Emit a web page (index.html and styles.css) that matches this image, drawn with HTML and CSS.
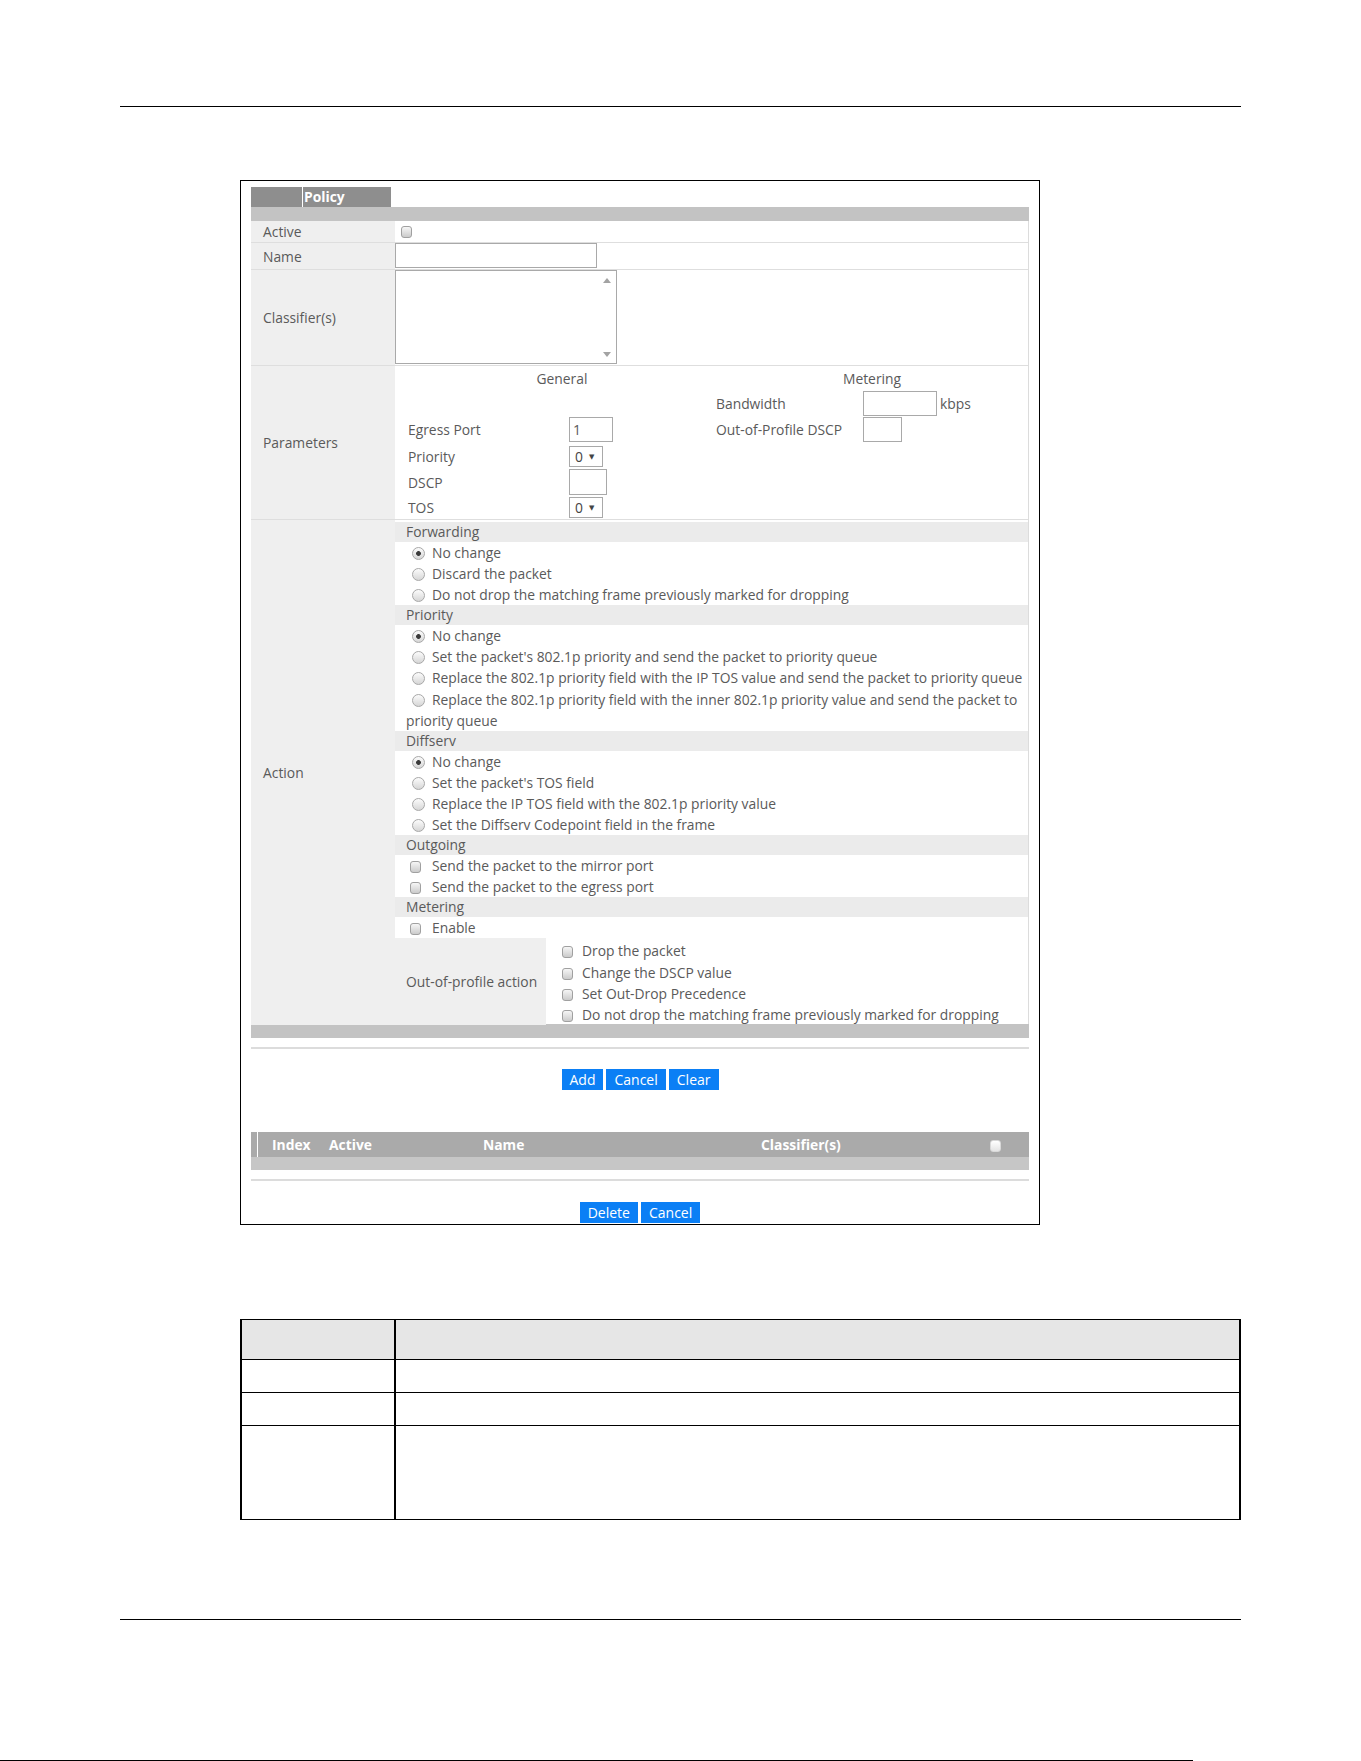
FILE: index.html
```html
<!DOCTYPE html>
<html lang="en">
  <head>
    <meta charset="UTF-8" />
    <title>Policy</title>
    <link rel="stylesheet" href="styles.css">
  </head>
  <body>
    <div class="page">
      <div class="rule rule-top"></div>

      <div class="shot">
        <div class="tab"><span class="tab-text">Policy</span></div>
        <div class="bar"></div>

        <div class="form">
          <div class="frow h-active">
            <div class="flabel">Active</div>
            <div class="fval"><input type="checkbox" class="cb cb-active"></div>
          </div>
          <div class="frow h-name">
            <div class="flabel">Name</div>
            <div class="fval top"><input type="text" class="tin w-name"></div>
          </div>
          <div class="frow h-class">
            <div class="flabel">Classifier(s)</div>
            <div class="fval top">
              <div class="tarea">
                <div class="tarea-body"></div>
                <div class="tarea-scroll"><span class="arr arr-up"></span><span class="arr arr-down"></span></div>
              </div>
            </div>
          </div>
          <div class="frow h-params">
            <div class="flabel">Parameters</div>
            <div class="params">
              <div class="phead">General</div>
              <div class="phead">Metering</div>

              <div></div><div></div>
              <div>Bandwidth</div>
              <div><input type="text" class="tin w-bw"><span class="unit">kbps</span></div>

              <div>Egress Port</div>
              <div><input type="text" class="tin w-egress" value="1"></div>
              <div>Out-of-Profile DSCP</div>
              <div><input type="text" class="tin w-oop"></div>

              <div>Priority</div>
              <div><span class="sel">0<i>&#9660;</i></span></div>
              <div></div><div></div>

              <div>DSCP</div>
              <div><input type="text" class="tin w-dscp"></div>
              <div></div><div></div>

              <div>TOS</div>
              <div><span class="sel">0<i>&#9660;</i></span></div>
              <div></div><div></div>
            </div>
          </div>
          <div class="frow h-action">
            <div class="flabel">Action</div>
            <div class="action">
              <div class="sec-h">Forwarding</div>
              <div class="item"><input type="radio" name="fwd" class="rd" checked>No change</div>
              <div class="item"><input type="radio" name="fwd" class="rd">Discard the packet</div>
              <div class="item"><input type="radio" name="fwd" class="rd">Do not drop the matching frame previously marked for dropping</div>

              <div class="sec-h">Priority</div>
              <div class="item"><input type="radio" name="pri" class="rd" checked>No change</div>
              <div class="item"><input type="radio" name="pri" class="rd">Set the packet's 802.1p priority and send the packet to priority queue</div>
              <div class="item"><input type="radio" name="pri" class="rd">Replace the 802.1p priority field with the IP TOS value and send the packet to priority queue</div>
              <div class="item item-2"><input type="radio" name="pri" class="rd">Replace the 802.1p priority field with the inner 802.1p priority value and send the packet to<br>priority queue</div>

              <div class="sec-h">Diffserv</div>
              <div class="item"><input type="radio" name="dsv" class="rd" checked>No change</div>
              <div class="item"><input type="radio" name="dsv" class="rd">Set the packet's TOS field</div>
              <div class="item"><input type="radio" name="dsv" class="rd">Replace the IP TOS field with the 802.1p priority value</div>
              <div class="item"><input type="radio" name="dsv" class="rd">Set the Diffserv Codepoint field in the frame</div>

              <div class="sec-h">Outgoing</div>
              <div class="item"><input type="checkbox" class="cb">Send the packet to the mirror port</div>
              <div class="item"><input type="checkbox" class="cb">Send the packet to the egress port</div>

              <div class="sec-h">Metering</div>
              <div class="item"><input type="checkbox" class="cb">Enable</div>

              <div class="oop">
                <div class="oop-label">Out-of-profile action</div>
                <div class="oop-list">
                  <div class="oop-item"><input type="checkbox" class="cb">Drop the packet</div>
                  <div class="oop-item"><input type="checkbox" class="cb">Change the DSCP value</div>
                  <div class="oop-item"><input type="checkbox" class="cb">Set Out-Drop Precedence</div>
                  <div class="oop-item"><input type="checkbox" class="cb">Do not drop the matching frame previously marked for dropping</div>
                </div>
              </div>
            </div>
          </div>
        </div>

        <div class="bar"></div>
        <div class="sep"></div>

        <div class="btns btns-top">
          <button class="btn">Add</button>
          <button class="btn">Cancel</button>
          <button class="btn">Clear</button>
        </div>

        <div class="list-head">
          <span class="list-line"></span>
          <span class="c-index">Index</span>
          <span class="c-active">Active</span>
          <span class="c-name">Name</span>
          <span class="c-class">Classifier(s)</span>
          <span class="c-check"><input type="checkbox" class="cb cb-light"></span>
        </div>
        <div class="list-sub"></div>
        <div class="sep"></div>

        <div class="btns btns-bottom">
          <button class="btn">Delete</button>
          <button class="btn">Cancel</button>
        </div>
      </div>

      <div class="doc">
        <div class="doc-row doc-head"><div></div><div></div></div>
        <div class="doc-row h33"><div></div><div></div></div>
        <div class="doc-row h33"><div></div><div></div></div>
        <div class="doc-row h94"><div></div><div></div></div>
      </div>

      <div class="rule rule-bottom"></div>
      <div class="edge"></div>
    </div>
  </body>
</html>
```

FILE: styles.css
```css
/* General styles */
* {
  box-sizing: border-box;
}

body {
  margin: 0;
  background-color: #fff;
  font-family: "Open Sans", "DejaVu Sans", sans-serif;
}

.page {
  width: 1361px;
  height: 1761px;
  overflow: hidden;
}

.rule {
  height: 1px;
  margin: 0 120px;
  background-color: #000;
}

.rule-top {
  margin-top: 106px;
}

.rule-bottom {
  margin-top: 99px;
}

.edge {
  width: 1193px;
  height: 1px;
  margin-top: 140px;
  background-color: #000;
}

/* Screenshot box */
.shot {
  width: 800px;
  margin: 73px 0 0 240px;
  padding: 6px 10px 1px;
  border: 1px solid #000;
  font-size: 13.85px;
  color: #5a5a5a;
}

.tab {
  width: 140px;
  height: 20px;
  padding-left: 51px;
  background-color: #8e8e8e;
}

.tab-text {
  display: block;
  height: 20px;
  padding-left: 1px;
  border-left: 1px solid #fff;
  color: #fff;
  font-weight: bold;
  line-height: 20px;
}

.bar {
  height: 14px;
  background-color: #c3c3c3;
}

.form {
  border-right: 1px solid #dcdcdc;
}

.frow {
  display: grid;
  grid-template-columns: 144px 1fr;
  border-bottom: 1px solid #dedede;
}

.h-active { height: 22px; }
.h-name { height: 27px; }
.h-class { height: 96px; }
.h-params { height: 154px; }
.h-action { height: 504px; border-bottom: none; }

.flabel {
  display: flex;
  align-items: center;
  padding-left: 12px;
  background-color: #efefef;
}

.fval {
  display: flex;
  align-items: center;
}

.fval.top {
  align-items: flex-start;
}

/* Inputs */
.tin {
  height: 25px;
  margin: 0;
  padding: 0 3px;
  border: 1px solid #a9a9a9;
  border-radius: 0;
  font: 14px "Open Sans", sans-serif;
  color: #5a5a5a;
  vertical-align: middle;
}

.w-name { width: 202px; }
.w-egress { width: 44px; }
.w-dscp { width: 38px; height: 26px; }
.w-bw { width: 74px; }
.w-oop { width: 39px; }

.unit {
  margin-left: 3px;
  vertical-align: middle;
}

.sel {
  display: inline-flex;
  align-items: center;
  width: 34px;
  height: 21px;
  padding-left: 5px;
  border: 1px solid #a9a9a9;
  color: #444;
}

.sel i {
  margin-left: 6px;
  font-style: normal;
  font-size: 7px;
}

.tarea {
  display: flex;
  width: 222px;
  height: 94px;
  border: 1px solid #a9a9a9;
}

.tarea-body {
  flex: 1;
}

.tarea-scroll {
  display: flex;
  flex-direction: column;
  justify-content: space-between;
  align-items: center;
  width: 19px;
  padding: 7px 0 6px;
}

.arr {
  width: 0;
  height: 0;
  border-left: 4px solid transparent;
  border-right: 4px solid transparent;
}

.arr-up {
  border-bottom: 5px solid #a3a3a3;
}

.arr-down {
  border-top: 5px solid #a3a3a3;
}

.cb {
  appearance: none;
  width: 11px;
  height: 12px;
  margin: 0;
  border: 1px solid #a0a0a0;
  border-radius: 3px;
  background: linear-gradient(#f6f6f6, #cbcbcb);
  vertical-align: -2px;
}

.cb-active {
  margin-left: 6px;
}

.cb-light {
  border-color: #d8d8d8;
  background: linear-gradient(#ffffff, #e4e4e4);
}

.rd {
  appearance: none;
  width: 13px;
  height: 13px;
  margin: 0 7px 0 6px;
  border: 1px solid #a8a8a8;
  border-radius: 50%;
  background: linear-gradient(#fcfcfc, #d6d6d6);
  vertical-align: -2px;
}

.rd:checked {
  background: radial-gradient(circle, #3a3a3a 0, #3a3a3a 2px, transparent 2.8px), linear-gradient(#fcfcfc, #d6d6d6);
}

/* Parameters */
.params {
  display: grid;
  grid-template-columns: 161px 147px 147px 1fr;
  grid-template-rows: 24px 26px 27px 26px 26px 24px;
  align-items: center;
  padding-left: 13px;
}

.phead {
  grid-column: span 2;
  text-align: center;
}

/* Action */
.action {
  display: flex;
  flex-direction: column;
  padding-top: 2px;
}

.sec-h {
  height: 20px;
  padding-left: 11px;
  background-color: #ebebeb;
  line-height: 20px;
}

.item {
  height: 21.1px;
  padding-left: 11px;
  line-height: 21.1px;
  white-space: nowrap;
}

.item-2 {
  height: 42.2px;
}

.item .cb {
  margin: 0 11px 0 4px;
}

.oop {
  flex: 1;
  display: grid;
  grid-template-columns: 151px 1fr;
}

.oop-label {
  display: flex;
  align-items: center;
  padding-left: 11px;
  background-color: #efefef;
}

.oop-list {
  padding-top: 2px;
}

.oop-item {
  height: 21.2px;
  padding-left: 16px;
  line-height: 21.2px;
  white-space: nowrap;
}

.oop-item .cb {
  margin-right: 9px;
}

/* Buttons and list */
.sep {
  height: 2px;
  margin-top: 9px;
  background-color: #dcdcdc;
}

.btns {
  display: flex;
  justify-content: center;
  gap: 3px;
}

.btns-top {
  margin-top: 20px;
}

.btns-bottom {
  margin-top: 21px;
}

.btn {
  height: 21px;
  padding: 0 8px;
  border: none;
  background-color: #0b7ff5;
  color: #fff;
  font: 14px "Open Sans", sans-serif;
  line-height: 21px;
  cursor: pointer;
}

.list-head {
  display: flex;
  height: 25px;
  margin-top: 42px;
  padding-left: 6px;
  background-color: #aaaaaa;
  color: #fff;
  font-weight: bold;
  line-height: 25px;
}

.list-line {
  width: 1px;
  background-color: #fff;
}

.c-index { margin-left: 14px; width: 57px; }
.c-active { width: 154px; }
.c-name { width: 278px; }
.c-class { width: 229px; }

.list-sub {
  height: 13px;
  background-color: #c6c6c6;
}

/* Document table */
.doc {
  width: 1001px;
  margin: 94px 0 0 240px;
  border-top: 1px solid #000;
  border-left: 2px solid #000;
  border-right: 2px solid #000;
}

.doc-row {
  display: grid;
  grid-template-columns: 154px 1fr;
  border-bottom: 1px solid #000;
}

.doc-row > div:first-child {
  border-right: 2px solid #000;
}

.doc-head {
  height: 40px;
  background-color: #e6e6e6;
}

.h33 { height: 33px; }
.h94 { height: 94px; }
```
